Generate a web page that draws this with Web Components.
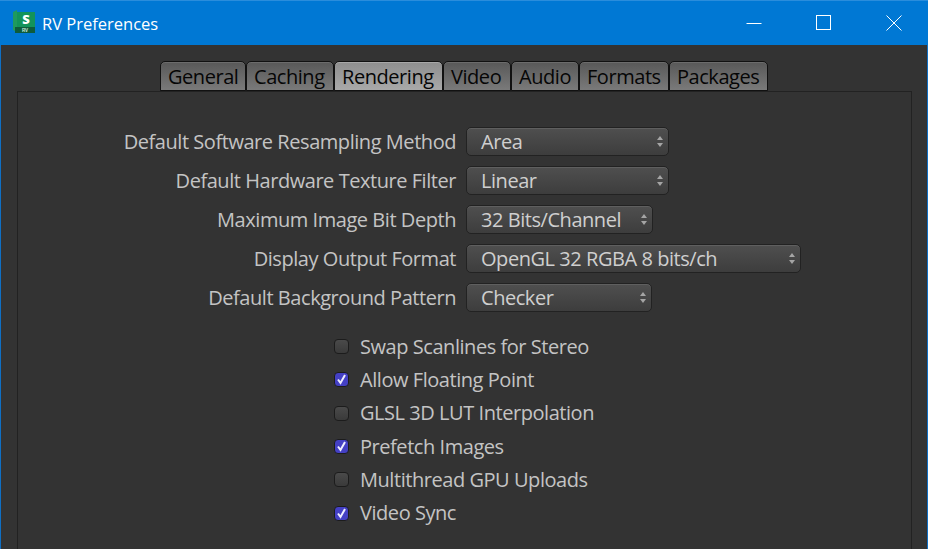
<!DOCTYPE html>
<html>
<head>
<meta charset="utf-8">
<title>RV Preferences</title>
<style>
html, body { margin: 0; height: 100%; overflow: hidden; background: #333; }
body { font-family: "Open Sans", "Noto Sans", sans-serif; }
</style>
</head>
<body>
<rv-window caption="RV Preferences">
  <rv-tabs>
    <rv-tab width="86">General</rv-tab>
    <rv-tab width="88">Caching</rv-tab>
    <rv-tab width="109" active>Rendering</rv-tab>
    <rv-tab width="68">Video</rv-tab>
    <rv-tab width="68">Audio</rv-tab>
    <rv-tab width="90">Formats</rv-tab>
    <rv-tab width="99">Packages</rv-tab>
  </rv-tabs>
  <rv-pane>
    <rv-field label="Default Software Resampling Method" value="Area" width="203"></rv-field>
    <rv-field label="Default Hardware Texture Filter" value="Linear" width="203"></rv-field>
    <rv-field label="Maximum Image Bit Depth" value="32 Bits/Channel" width="187"></rv-field>
    <rv-field label="Display Output Format" value="OpenGL 32 RGBA 8 bits/ch" width="335"></rv-field>
    <rv-field label="Default Background Pattern" value="Checker" width="186"></rv-field>
    <rv-checks>
      <rv-check>Swap Scanlines for Stereo</rv-check>
      <rv-check checked>Allow Floating Point</rv-check>
      <rv-check>GLSL 3D LUT Interpolation</rv-check>
      <rv-check checked>Prefetch Images</rv-check>
      <rv-check>Multithread GPU Uploads</rv-check>
      <rv-check checked>Video Sync</rv-check>
    </rv-checks>
  </rv-pane>
</rv-window>
<script>
class RvWindow extends HTMLElement{
    constructor(){
        super();
        this._root = this.attachShadow({mode: 'open'});
    }
    connectedCallback(){
        this._root.innerHTML = `
            <style>
                :host{
                    display: flex;
                    flex-direction: column;
                    height: 549px;
                    box-sizing: border-box;
                    border-left: 1px solid #0f6fc4;
                    border-right: 1px solid #0f6fc4;
                    color: #c8c8c8;
                    font: 20px/26px "Open Sans", "Noto Sans", sans-serif;
                    letter-spacing: -0.45px;
                }
                .bar{
                    flex: none;
                    height: 45px;
                    margin: 0 -1px;
                    background: #0078d4;
                    border-top: 1px solid #2a8ddc;
                    box-sizing: border-box;
                    display: flex;
                    align-items: center;
                    color: #fff;
                    letter-spacing: 0;
                }
                .logo{ margin: -2px 0 0 12px; width: 24px; height: 24px; flex: none; }
                .caption{ margin: 2px 0 0 6px; font-size: 16.5px; flex: 1; }
                .btn{ width: 70px; height: 44px; display: flex; align-items: center; justify-content: center; flex: none; }
                .btn svg{ display: block; }
                .body{ flex: 1; display: flex; flex-direction: column; padding: 16px 15px 0 16px; min-height: 0; }
            </style>
            <div class="bar">
                <svg class="logo" viewBox="0 0 24 24">
                    <path d="M1 2 L5 0 V22 L1 20Z" fill="#1f9a5e"/>
                    <rect x="5" y="2" width="18" height="15" fill="#13935a"/>
                    <path d="M3 21 V17 H23 V23 H3Z" fill="#0d5c3b"/>
                    <text x="14" y="14" text-anchor="middle" font-family="Open Sans" font-weight="800" font-size="13" letter-spacing="0" fill="#fff">S</text>
                    <text x="13" y="22" text-anchor="middle" font-family="Liberation Sans" font-weight="700" font-size="4.5" letter-spacing="0" fill="#cfe9dc">RV</text>
                </svg>
                <div class="caption">${this.getAttribute('caption')}</div>
                <div class="btn"><svg width="16" height="16" viewBox="0 0 16 16"><path d="M0.5 8.5H15.5" stroke="#fff" fill="none"/></svg></div>
                <div class="btn"><svg width="16" height="16" viewBox="0 0 16 16"><rect x="0.5" y="0.5" width="14" height="14" stroke="#fff" fill="none"/></svg></div>
                <div class="btn" style="margin-right:-1px"><svg width="16" height="16" viewBox="0 0 16 16"><path d="M0.5 0.5L15.5 15.5M15.5 0.5L0.5 15.5" stroke="#fff" fill="none"/></svg></div>
            </div>
            <div class="body"><slot></slot></div>
        `;
    }
}
class RvTabs extends HTMLElement{
    constructor(){
        super();
        this._root = this.attachShadow({mode: 'open'});
    }
    connectedCallback(){
        this._root.innerHTML = `
            <style>
                :host{
                    display: flex;
                    justify-content: flex-start;
                    height: 30px;
                    padding-left: 143px;
                    position: relative;
                    z-index: 1;
                }
            </style>
            <slot></slot>
        `;
    }
}
class RvTab extends HTMLElement{
    constructor(){
        super();
        this._root = this.attachShadow({mode: 'open'});
    }
    connectedCallback(){
        this._root.innerHTML = `
            <style>
                :host{
                    display: block;
                    flex: none;
                    box-sizing: border-box;
                    width: ${this.getAttribute('width')}px;
                    height: 30px;
                    padding: 2px 0 0 7px;
                    border: 1px solid #111;
                    border-radius: 5px 5px 0 0;
                    background: linear-gradient(#585858, #7a7a7a);
                    box-shadow: inset 0 1px 0 #6c6c6c;
                    color: #060606;
                    line-height: 26px;
                    white-space: nowrap;
                }
                :host([active]){
                    background: linear-gradient(#8e8e8e, #a9a9a9);
                    box-shadow: inset 0 1px 0 #a8a8a8;
                }
            </style>
            <slot></slot>
        `;
    }
}
class RvPane extends HTMLElement{
    constructor(){
        super();
        this._root = this.attachShadow({mode: 'open'});
    }
    connectedCallback(){
        this._root.innerHTML = `
            <style>
                :host{
                    display: flex;
                    flex-direction: column;
                    gap: 10px;
                    flex: 1;
                    height: 470px;
                    box-sizing: border-box;
                    border: 1px solid #222;
                    border-bottom: 0;
                    padding-top: 35px;
                }
            </style>
            <slot></slot>
        `;
    }
}
class RvField extends HTMLElement{
    constructor(){
        super();
        this._root = this.attachShadow({mode: 'open'});
    }
    connectedCallback(){
        this._root.innerHTML = `
            <style>
                :host{
                    display: grid;
                    grid-template-columns: 438px auto;
                    column-gap: 10px;
                    align-items: center;
                    height: 29px;
                }
                .label{ text-align: right; white-space: nowrap; color: #c4c4c4; }
                .combo{
                    box-sizing: border-box;
                    height: 29px;
                    width: ${this.getAttribute('width')}px;
                    padding-left: 14px;
                    border: 1px solid #222;
                    border-radius: 5px;
                    background: linear-gradient(#4f4f4f, #3d3d3d);
                    box-shadow: inset 0 1px 0 #5f5f5f;
                    position: relative;
                    line-height: 27px;
                    color: #cfcfcf;
                    white-space: nowrap;
                }
                svg{ position: absolute; right: 4px; top: 7px; }
            </style>
            <div class="label">${this.getAttribute('label')}</div>
            <div class="combo">${this.getAttribute('value')}
                <svg width="8" height="13" viewBox="0 0 8 13"><path d="M4 1L7 5H1Z M4 12L1 8H7Z" fill="#a5a5a5"/></svg>
            </div>
        `;
    }
}
class RvChecks extends HTMLElement{
    constructor(){
        super();
        this._root = this.attachShadow({mode: 'open'});
    }
    connectedCallback(){
        this._root.innerHTML = `
            <style>
                :host{
                    display: flex;
                    flex-direction: column;
                    padding: 8px 0 0 316px;
                }
            </style>
            <slot></slot>
        `;
    }
}
class RvCheck extends HTMLElement{
    constructor(){
        super();
        this._root = this.attachShadow({mode: 'open'});
    }
    connectedCallback(){
        let on = this.hasAttribute('checked');
        this._root.innerHTML = `
            <style>
                :host{
                    display: flex;
                    align-items: center;
                    height: 33.3px;
                    color: #c4c4c4;
                }
                .box{
                    box-sizing: border-box;
                    width: 15px;
                    height: 15px;
                    margin-right: 11px;
                    border: 1px solid #1c1c1c;
                    border-radius: 4px;
                    background: ${on ? '#4440c4' : 'linear-gradient(#4a4a4a, #3a3a3a)'};
                    flex: none;
                }
                svg{ display: block; }
            </style>
            <div class="box">${on ? '<svg width="13" height="13" viewBox="0 0 13 13"><path d="M3 6.5L5.5 10L10 2" stroke="#eef" stroke-width="2" fill="none"/></svg>' : ''}</div>
            <slot></slot>
        `;
    }
}
window.customElements.define('rv-window', RvWindow);
window.customElements.define('rv-tabs', RvTabs);
window.customElements.define('rv-tab', RvTab);
window.customElements.define('rv-pane', RvPane);
window.customElements.define('rv-field', RvField);
window.customElements.define('rv-checks', RvChecks);
window.customElements.define('rv-check', RvCheck);
</script>
</body>
</html>
